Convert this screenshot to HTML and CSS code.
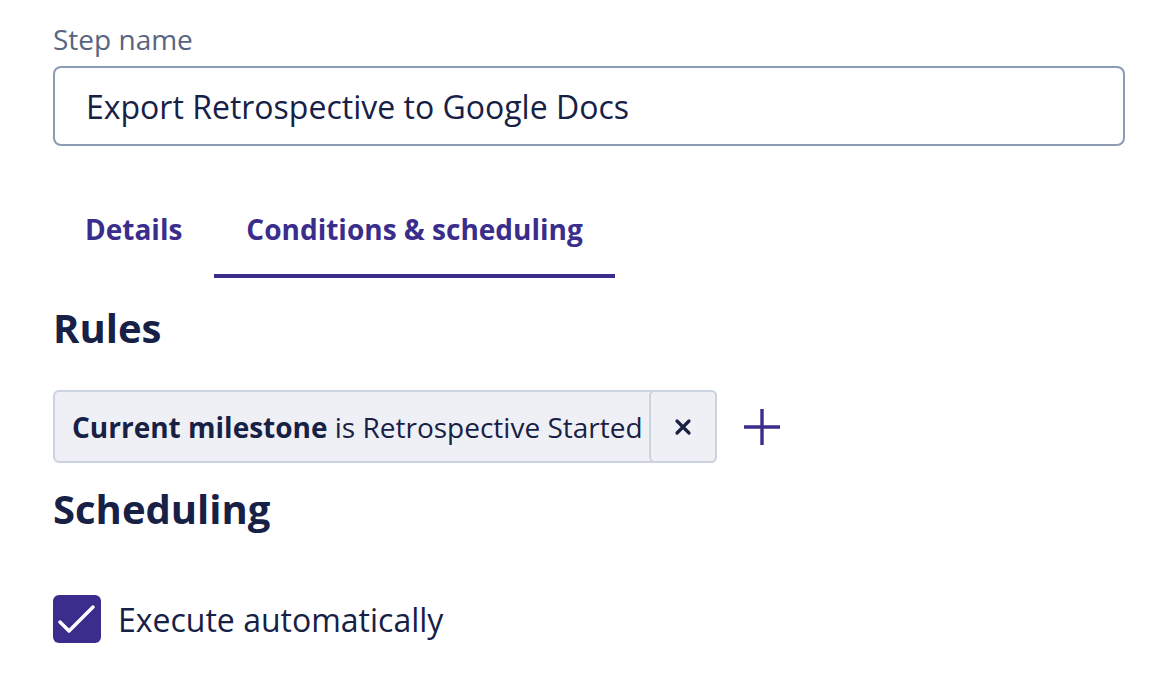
FILE: index.html
```html
<!DOCTYPE html>
<html lang="en">
<head>
    <meta charset="UTF-8">
    <meta name="viewport" content="width=device-width, initial-scale=1.0">
    <title>Edit step</title>
    <link rel="stylesheet" href="styles.css">
</head>
<body>
    <div class="step-form">
        <label class="field-label" for="stepName">Step name</label>
        <input class="text-input" type="text" id="stepName" value="Export Retrospective to Google Docs">

        <div class="tabs">
            <button class="tab">Details</button>
            <button class="tab active">Conditions &amp; scheduling</button>
        </div>

        <h2 class="section-title rules-title">Rules</h2>
        <div class="rules-row">
            <div class="rule-chip">
                <span class="rule-text"><b>Current milestone</b>&nbsp;is Retrospective Started</span>
                <button class="rule-remove" aria-label="Remove rule">
                    <svg width="18" height="18" viewBox="0 0 18 18">
                        <path d="M3 3 L15 15 M15 3 L3 15" stroke="#1a2244" stroke-width="3.2" stroke-linecap="round"/>
                    </svg>
                </button>
            </div>
            <button class="add-rule" aria-label="Add rule">
                <svg width="38" height="38" viewBox="0 0 38 38">
                    <path d="M19 1 V37 M1 19 H37" stroke="#3a2d8c" stroke-width="3.4"/>
                </svg>
            </button>
        </div>

        <h2 class="section-title schedule-title">Scheduling</h2>
        <label class="checkbox">
            <span class="checkbox-box">
                <svg width="48" height="48" viewBox="0 0 48 48">
                    <path d="M7 27 L16 36 L40 12" fill="none" stroke="#fff" stroke-width="3.5" stroke-linecap="round" stroke-linejoin="round"/>
                </svg>
            </span>
            <span class="checkbox-label">Execute automatically</span>
        </label>
    </div>
</body>
</html>
```

FILE: styles.css
```css
body {
    margin: 0;
    background-color: #fff;
    font-family: "Open Sans", "Noto Sans", sans-serif;
    color: #172146;
}
.step-form {
    width: 1072px;
    padding: 21px 0 0 53px;
}
.field-label {
    display: block;
    font-size: 28px;
    line-height: 37px;
    color: #58657f;
    margin-bottom: 8px;
}
.text-input {
    box-sizing: border-box;
    width: 1072px;
    height: 80px;
    padding: 0 31px;
    border: 2px solid #8c9ab4;
    border-radius: 8px;
    font-family: inherit;
    font-size: 32px;
    color: #172146;
    outline: none;
}
.tabs {
    display: flex;
    margin-top: 64px;
}
.tab {
    background: none;
    border: none;
    border-bottom: 4px solid transparent;
    padding: 0 32px 26px;
    font-family: inherit;
    font-size: 28px;
    font-weight: 700;
    line-height: 38px;
    color: #3a2d8c;
    cursor: pointer;
}
.tab.active {
    border-bottom-color: #3a2d8c;
}
.section-title {
    margin: 0;
    font-size: 40px;
    font-weight: 700;
    line-height: 52px;
    color: #172146;
}
.rules-title {
    margin-top: 24px;
}
.rules-row {
    display: flex;
    align-items: center;
    gap: 26px;
    margin-top: 36px;
}
.rule-chip {
    display: flex;
    align-items: stretch;
    height: 73px;
    box-sizing: border-box;
    background-color: #eff0f5;
    border: 2px solid #cbd2e0;
    border-radius: 6px;
}
.rule-text {
    display: flex;
    align-items: center;
    padding: 0 6px 0 17px;
    font-size: 28px;
    white-space: nowrap;
}
.rule-remove {
    width: 68px;
    margin: -2px -2px -2px 0;
    background-color: #eff0f5;
    border: 2px solid #cbd2e0;
    border-radius: 6px;
    display: flex;
    align-items: center;
    justify-content: center;
    cursor: pointer;
}
.add-rule {
    background: none;
    border: none;
    padding: 0;
    display: flex;
    cursor: pointer;
}
.schedule-title {
    margin-top: 20px;
}
.checkbox {
    display: flex;
    align-items: center;
    gap: 17px;
    margin-top: 60px;
}
.checkbox-box {
    width: 48px;
    height: 48px;
    border-radius: 6px;
    background-color: #3a2d8c;
    display: flex;
    align-items: center;
    justify-content: center;
}
.checkbox-label {
    font-size: 32px;
}
```
